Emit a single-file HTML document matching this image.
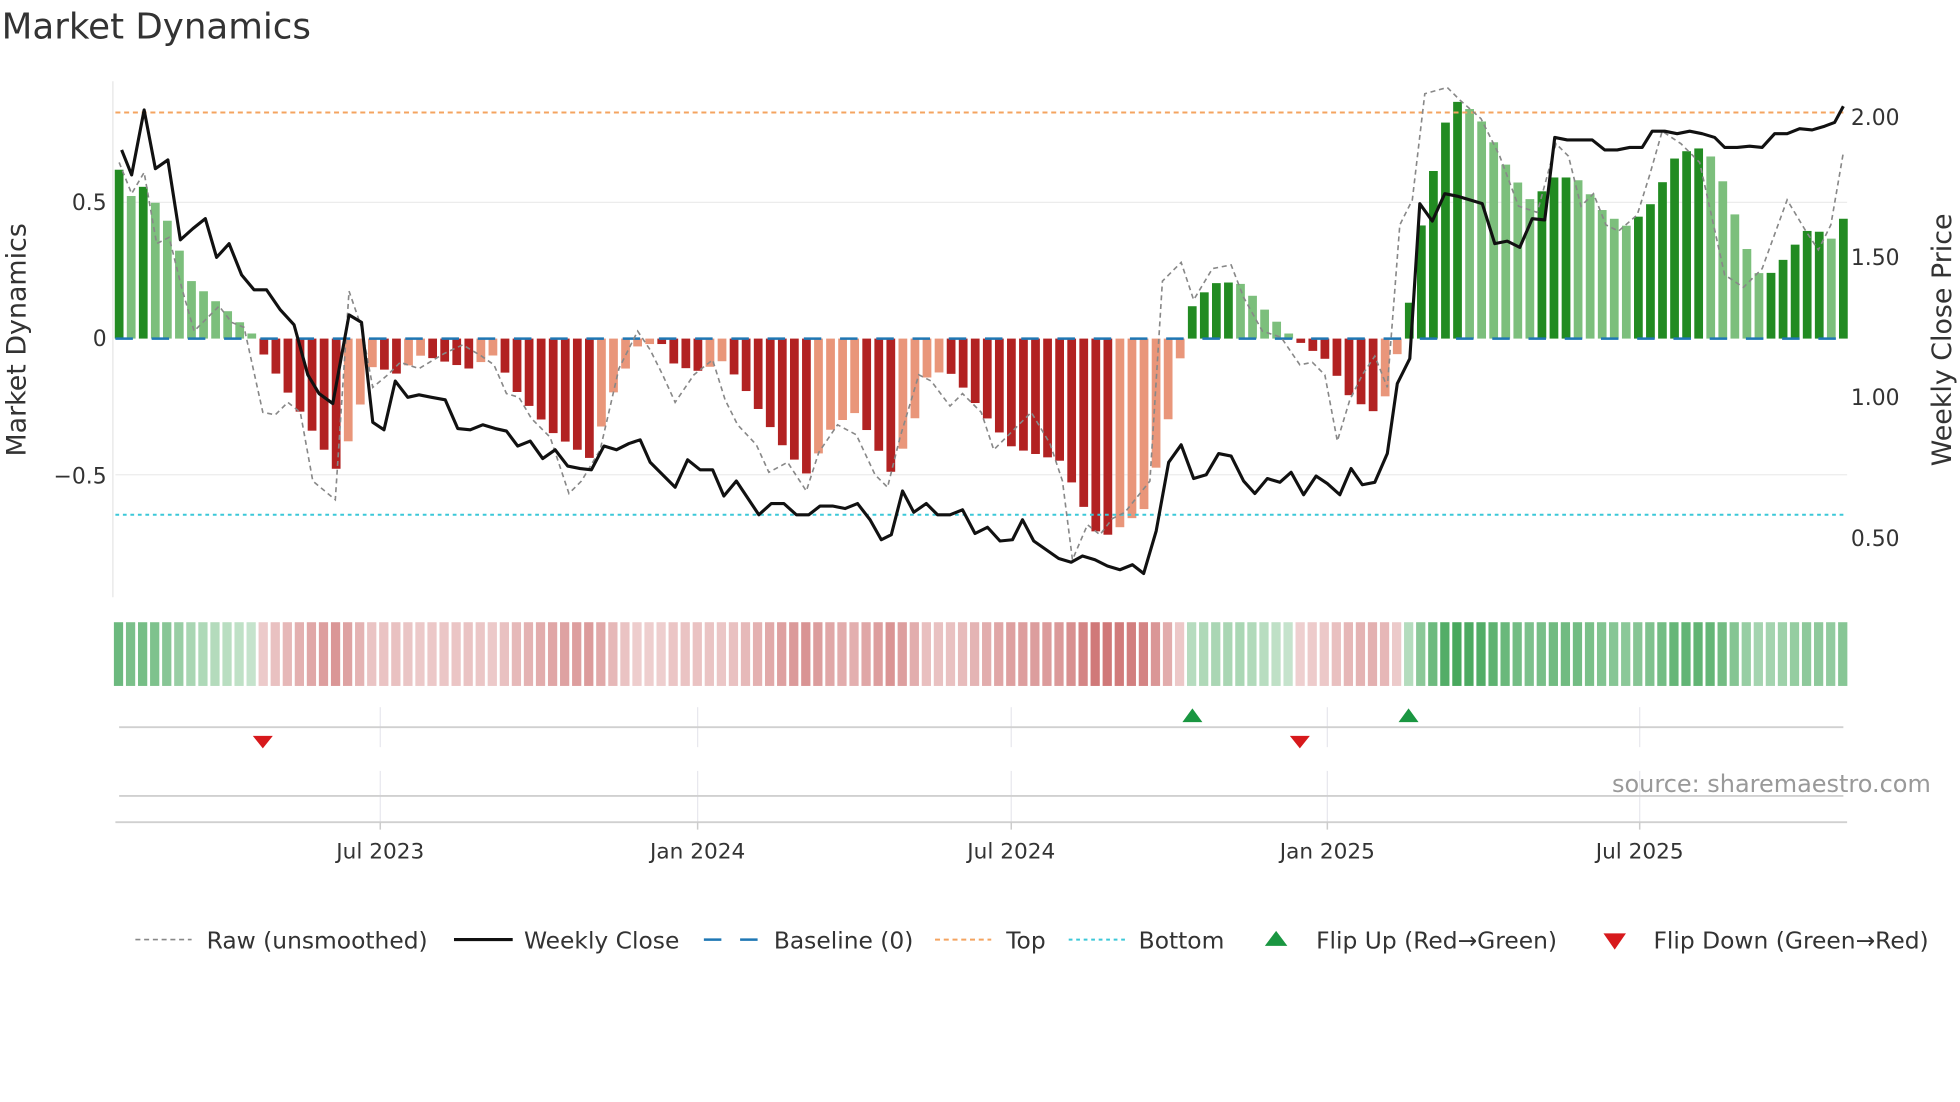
<!DOCTYPE html>
<html><head><meta charset="utf-8"><style>
html,body{margin:0;padding:0;background:#fff;}
svg{display:block;font-family:"DejaVu Sans","Liberation Sans",sans-serif;}
</style></head><body>
<svg id="s" width="1960" height="1102" viewBox="0 0 1568 882" xmlns="http://www.w3.org/2000/svg">
<rect width="1568" height="882" fill="#fff"/>
<text x="1" y="31" font-size="28.5" fill="#333">Market Dynamics</text>
<line x1="90" y1="65" x2="90" y2="478" stroke="#e6e6e6"/>
<line x1="92" y1="162" x2="1478" y2="162" stroke="#ececec"/>
<line x1="92" y1="380" x2="1478" y2="380" stroke="#ececec"/>
<g id="bars"></g>
<g id="strip"></g>
<line x1="92" y1="271" x2="1478" y2="271" stroke="#1f77b4" stroke-width="2" stroke-dasharray="14,15"/>
<line x1="92" y1="90" x2="1478" y2="90" stroke="#f4a460" stroke-width="1.6" stroke-dasharray="4,3"/>
<line x1="92" y1="412" x2="1478" y2="412" stroke="#3cc8d8" stroke-width="1.6" stroke-dasharray="3,3"/>
<polyline id="raw" fill="none" stroke="#888" stroke-width="1.3" stroke-dasharray="4,3"/>
<polyline id="px" fill="none" stroke="#111" stroke-width="2.5" stroke-linejoin="round"/>
<g font-size="17.5" fill="#333">
<text x="85" y="168" text-anchor="end">0.5</text>
<text x="85" y="277" text-anchor="end">0</text>
<text x="85" y="387" text-anchor="end">−0.5</text>
<text x="1481" y="100">2.00</text>
<text x="1481" y="212">1.50</text>
<text x="1481" y="324">1.00</text>
<text x="1481" y="437">0.50</text>
</g>
<text transform="translate(20,272) rotate(-90)" font-size="21.5" fill="#333" text-anchor="middle">Market Dynamics</text>
<text transform="translate(1561,272) rotate(-90)" font-size="21.5" fill="#333" text-anchor="middle">Weekly Close Price</text>
<g stroke="#e8e8ee">
<line x1="304" y1="566" x2="304" y2="598"/><line x1="558" y1="566" x2="558" y2="598"/><line x1="809" y1="566" x2="809" y2="598"/><line x1="1062" y1="566" x2="1062" y2="598"/><line x1="1312" y1="566" x2="1312" y2="598"/>
<line x1="304" y1="617" x2="304" y2="658"/><line x1="558" y1="617" x2="558" y2="658"/><line x1="809" y1="617" x2="809" y2="658"/><line x1="1062" y1="617" x2="1062" y2="658"/><line x1="1312" y1="617" x2="1312" y2="658"/>
</g>
<line x1="95" y1="582" x2="1475" y2="582" stroke="#d0d0d0" stroke-width="1.5"/>
<line x1="95" y1="637" x2="1475" y2="637" stroke="#d0d0d0" stroke-width="1.5"/>
<line x1="92" y1="658" x2="1478" y2="658" stroke="#d0d0d0" stroke-width="1.5"/>
<g stroke="#ccc" stroke-width="1.2"><line x1="304" y1="658" x2="304" y2="664"/><line x1="558" y1="658" x2="558" y2="664"/><line x1="809" y1="658" x2="809" y2="664"/><line x1="1062" y1="658" x2="1062" y2="664"/><line x1="1312" y1="658" x2="1312" y2="664"/></g>
<path d="M946,578 L954,567 L962,578Z M1119,578 L1127,567 L1135,578Z" fill="#1a9641"/>
<path d="M202,589 L218,589 L210,599Z M1032,589 L1048,589 L1040,599Z" fill="#d7191c"/>
<text x="1545" y="634" font-size="19.2" fill="#999" text-anchor="end">source: sharemaestro.com</text>
<g font-size="17.3" fill="#333" text-anchor="middle">
<text x="304" y="687">Jul 2023</text><text x="558" y="687">Jan 2024</text><text x="809" y="687">Jul 2024</text><text x="1062" y="687">Jan 2025</text><text x="1312" y="687">Jul 2025</text>
</g>
<g font-size="18.7" fill="#333">
<line x1="108" y1="752" x2="153" y2="752" stroke="#888" stroke-width="1.3" stroke-dasharray="4,3"/>
<text x="165" y="759">Raw (unsmoothed)</text>
<line x1="363" y1="752" x2="410" y2="752" stroke="#111" stroke-width="2.5"/>
<text x="419" y="759">Weekly Close</text>
<line x1="563" y1="752" x2="607" y2="752" stroke="#1f77b4" stroke-width="2" stroke-dasharray="14,15"/>
<text x="619" y="759">Baseline (0)</text>
<line x1="748" y1="752" x2="793" y2="752" stroke="#f4a460" stroke-width="1.6" stroke-dasharray="4,3"/>
<text x="805" y="759">Top</text>
<line x1="855" y1="752" x2="900" y2="752" stroke="#3cc8d8" stroke-width="1.6" stroke-dasharray="3,3"/>
<text x="911" y="759">Bottom</text>
<path d="M1012,757 L1021,745 L1030,757Z" fill="#1a9641"/>
<text x="1053" y="759">Flip Up (Red→Green)</text>
<path d="M1283,747 L1301,747 L1292,760Z" fill="#d7191c"/>
<text x="1323" y="759">Flip Down (Green→Red)</text>
</g>
</svg>
<script>
var NS="http://www.w3.org/2000/svg";
function interp(k,x){if(x<=k[0][0])return k[0][1];for(var i=1;i<k.length;i++){if(x<=k[i][0]){var a=k[i-1],b=k[i];return a[1]+(b[1]-a[1])*(x-a[0])/(b[0]-a[0]);}}return k[k.length-1][1];}
var bk=[[95,0.62],[105,0.52],[115,0.56],[134,0.43],[153,0.21],[182,0.1],[201,0.02],[211,-0.06],[240,-0.27],[269,-0.48],[279,-0.37],[298,-0.1],[318,-0.13],[337,-0.06],[375,-0.11],[395,-0.06],[414,-0.2],[443,-0.35],[472,-0.44],[492,-0.18],[511,-0.02],[530,-0.02],[540,-0.1],[560,-0.12],[579,-0.08],[598,-0.2],[627,-0.4],[646,-0.5],[666,-0.32],[685,-0.27],[704,-0.42],[714,-0.5],[733,-0.28],[743,-0.12],[762,-0.13],[791,-0.3],[810,-0.4],[849,-0.45],[878,-0.72],[888,-0.72],[917,-0.62],[936,-0.27],[946,-0.03],[955,0.14],[975,0.21],[994,0.2],[1013,0.1],[1033,0.01],[1042,-0.02],[1062,-0.08],[1081,-0.22],[1100,-0.27],[1110,-0.2],[1120,-0.02],[1129,0.16],[1139,0.47],[1158,0.82],[1168,0.88],[1187,0.79],[1207,0.62],[1226,0.5],[1245,0.6],[1264,0.58],[1284,0.46],[1303,0.41],[1322,0.5],[1342,0.68],[1361,0.7],[1371,0.66],[1381,0.55],[1400,0.3],[1410,0.22],[1420,0.25],[1439,0.36],[1449,0.41],[1468,0.36],[1475,0.44]];
var bars=document.getElementById("bars"),strip=document.getElementById("strip");
var prev=0,n=144,step=(1475-95)/(n-1);
function mix(c,t){return "rgb("+c.map(function(v){return Math.round(255+(v-255)*t)}).join(",")+")";}
for(var i=0;i<n;i++){var x=95+i*step,v=interp(bk,x);
var dark=Math.abs(v)>=Math.abs(prev)-0.005;
var col=v>=0?(dark?"#228b22":"#7cbf7c"):(dark?"#b22222":"#e9967a");
var h=Math.abs(v)*218;var r=document.createElementNS(NS,"rect");
r.setAttribute("x",x-3.5);r.setAttribute("width",7);r.setAttribute("y",v>=0?271-h:271);r.setAttribute("height",Math.max(h,0.5));r.setAttribute("fill",col);bars.appendChild(r);
var t=0.25+0.6*Math.min(Math.abs(v),0.9)/0.9;var sc=v>=0?mix([34,150,60],t):mix([190,70,70],t);
var s=document.createElementNS(NS,"rect");s.setAttribute("x",x-4.2);s.setAttribute("width",7.4);s.setAttribute("y",498);s.setAttribute("height",51);s.setAttribute("fill",sc);strip.appendChild(s);
prev=v;}
var pk="97,120 105,140 115,88 124,135 134,128 144,192 154,183 164,175 173,206 183,195 193,220 203,232 213,232 224,248 235,260 246,300 255,315 266,323 279,252 289,258 298,338 307,344 316,305 326,318 335,316 345,318 356,320 366,343 376,344 386,340 396,343 405,345 414,357 424,353 434,367 444,360 454,373 464,375 473,376 483,357 493,360 503,355 512,352 520,370 530,380 540,390 550,368 560,376 570,376 579,397 589,385 599,400 607,412 617,403 627,403 637,412 647,412 656,405 666,405 676,407 686,403 696,416 705,432 713,428 722,393 731,410 741,403 750,412 760,412 770,408 780,427 790,422 800,433 810,432 818,416 827,433 837,440 847,447 857,450 866,445 876,448 886,453 896,456 906,452 915,459 925,425 935,370 945,356 955,383 965,380 975,363 985,365 995,385 1004,395 1014,383 1024,386 1033,378 1043,396 1053,381 1062,387 1072,396 1081,375 1090,388 1100,386 1110,363 1118,307 1128,287 1136,163 1146,177 1156,155 1166,157 1176,160 1186,163 1196,195 1206,193 1216,198 1226,175 1236,176 1244,110 1254,112 1264,112 1274,112 1284,120 1294,120 1304,118 1314,118 1322,105 1332,105 1342,107 1352,105 1362,107 1372,110 1380,118 1390,118 1400,117 1410,118 1420,107 1430,107 1440,103 1450,104 1460,101 1468,98 1475,85";
document.getElementById("px").setAttribute("points",pk);
var rk="95,130 105,155 115,138 125,195 135,190 145,230 155,265 165,255 175,245 185,258 195,262 210,330 220,332 230,322 240,330 250,385 268,400 279,233 289,262 298,310 310,300 320,290 335,295 355,283 370,276 385,285 395,292 405,315 415,318 425,335 440,350 455,395 465,385 480,360 495,295 510,265 520,280 530,300 540,322 555,300 570,288 580,320 590,340 605,356 615,378 630,370 645,393 655,362 670,340 685,348 700,380 710,390 720,350 735,300 745,305 760,325 770,315 785,330 795,360 810,345 825,330 840,355 850,385 858,448 870,420 880,428 890,415 900,410 920,385 930,225 945,210 955,240 970,215 985,212 995,238 1010,265 1025,270 1040,292 1050,290 1060,300 1070,353 1080,320 1090,300 1100,285 1110,310 1120,180 1130,160 1140,75 1158,70 1168,80 1185,95 1200,125 1215,165 1230,170 1245,115 1255,125 1265,165 1275,155 1285,180 1295,185 1310,172 1320,140 1330,105 1345,115 1360,130 1370,175 1380,220 1395,230 1410,215 1430,160 1445,185 1455,200 1465,180 1475,122";
document.getElementById("raw").setAttribute("points",rk);
</script>
</body></html>
